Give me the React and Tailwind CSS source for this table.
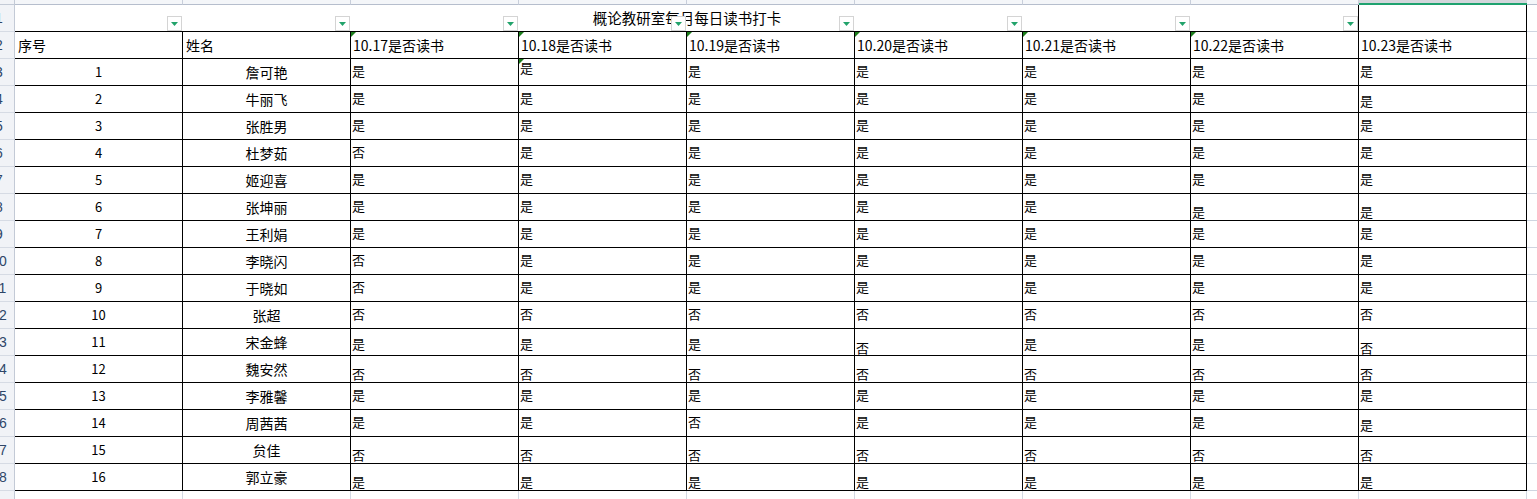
import React from 'react'

const dates = ['10.17', '10.18', '10.19', '10.20', '10.21', '10.22', '10.23']

// vertical offset of the 是/否 text in a cell (the sheet is not consistent)
const padOf = {
  a: 'pt-[3px]',
  u: 'pt-[0px]',
  b: 'pt-[6px]',
  c: 'pt-[9px]',
  d: 'pt-[10px]',
}

const rows = [
  [1, '詹可艳', '是是是是是是是', 'auaaaaa'],
  [2, '牛丽飞', '是是是是是是是', 'aaaaaab'],
  [3, '张胜男', '是是是是是是是', 'aaaaaaa'],
  [4, '杜梦茹', '否是是是是是是', 'aaaaaaa'],
  [5, '姬迎喜', '是是是是是是是', 'aaaaaaa'],
  [6, '张坤丽', '是是是是是是是', 'aaaaacc'],
  [7, '王利娟', '是是是是是是是', 'aaaaaaa'],
  [8, '李晓闪', '否是是是是是是', 'aaaaaaa'],
  [9, '于晓如', '否是是是是是是', 'aaaaaaa'],
  [10, '张超', '否否否否否否否', 'aaaaaaa'],
  [11, '宋金蜂', '是是是否是是否', 'bbbdbbd'],
  [12, '魏安然', '否否否否否否否', 'ccccccc'],
  [13, '李雅馨', '是是是是是是是', 'aaaaaaa'],
  [14, '周茜茜', '是是否是是是是', 'aaaaaab'],
  [15, '贠佳', '否否否否否否否', 'ccccccc'],
  [16, '郭立豪', '是是是是是是是', 'ccccccc'],
]

const cjk = 'font-["Noto_Sans_CJK_SC","Noto_Sans",sans-serif]'

function Corner() {
  return (
    <svg className="absolute top-0 left-0" width="5" height="5" viewBox="0 0 5 5">
      <polygon points="0,0 5,0 0,5" fill="#1b7d1b" />
    </svg>
  )
}

function FilterBtn() {
  return (
    <div className="relative z-10 w-[15px] h-[15px] bg-white border border-[#d4d4d4] flex items-center justify-center">
      <svg width="7" height="4" viewBox="0 0 7 4">
        <polygon points="0,0 7,0 3.5,4" fill="#22a36b" />
      </svg>
    </div>
  )
}

function RowHead({ n, last }) {
  return (
    <div
      className={
        'w-[15px] shrink-0 h-full overflow-hidden bg-[#f1f3f7] border-r border-[#c3cad6] flex items-center ' +
        (last ? '' : 'border-b border-b-[#d6dbe4]')
      }
    >
      <div className="w-[30px] shrink-0 -ml-[16px] text-center text-[14px] text-[#2e4668] font-['Liberation_Sans',sans-serif] leading-none">
        {n}
      </div>
    </div>
  )
}

function Filler() {
  return <div className="flex-1 h-full border-b border-[#cfd5e0]" />
}

export default function App() {
  return (
    <div className="w-[1537px] h-[499px] overflow-hidden bg-white flex flex-col text-black">
      {/* column header tail */}
      <div className="h-[5px] shrink-0 flex">
        <div className="w-[15px] h-full bg-[#f1f3f7] border-r border-b border-[#c3cad6]" />
        {dates.concat(['', '']).slice(0, 8).map((_, i) => (
          <div key={i} className="w-[168px] h-full bg-[#f4f6f9] border-r border-b border-r-[#c9cfdb] border-b-[#b6becd]" />
        ))}
        <div className="w-[168px] h-full flex flex-col">
          <div className="h-[3px] bg-[#d3d6db]" />
          <div className="h-[2px] bg-[#1fa26f]" />
        </div>
        <div className="flex-1 h-full bg-[#f4f6f9] border-b border-[#b6becd]" />
      </div>

      {/* row 1: merged title with filter buttons */}
      <div className="h-[27px] shrink-0 flex">
        <RowHead n={1} />
        <div className="relative flex h-full border-b border-black">
          <div className={'absolute inset-0 flex items-center justify-center text-[14.5px] ' + cjk}>
            概论教研室每月每日读书打卡
          </div>
          {Array.from({ length: 8 }).map((_, i) => (
            <div
              key={i}
              className={
                'w-[168px] h-full flex items-end justify-end ' +
                (i === 7 ? 'border-r border-black' : 'pr-[1px]')
              }
            >
              <FilterBtn />
            </div>
          ))}
        </div>
        <div className="w-[168px] h-full border-r border-b border-black" />
        <Filler />
      </div>

      {/* row 2: headers */}
      <div className="h-[27px] shrink-0 flex">
        <RowHead n={2} />
        <div className={'w-[168px] h-full border-r border-b border-black flex items-center pl-[3px] text-[14px] ' + cjk}>
          序号
        </div>
        <div className={'w-[168px] h-full border-r border-b border-black flex items-center pl-[3px] text-[14px] ' + cjk}>
          姓名
        </div>
        {dates.map((d, i) => (
          <div
            key={d}
            className={'relative w-[168px] h-full border-r border-b border-black flex items-center pl-[2px] text-[14px] ' + cjk}
          >
            {i < 6 && <Corner />}
            {d}是否读书
          </div>
        ))}
        <Filler />
      </div>

      {/* data rows */}
      {rows.map(([no, name, vals, pads], r) => (
        <div key={no} className="h-[27px] shrink-0 flex">
          <RowHead n={r + 3} />
          <div className={'w-[168px] h-full border-r border-b border-black flex items-center justify-center text-[13px] ' + cjk}>
            {no}
          </div>
          <div className={'w-[168px] h-full border-r border-b border-black flex items-center justify-center text-[14px] ' + cjk}>
            {name}
          </div>
          {vals.split('').map((v, i) => (
            <div
              key={i}
              className={
                'relative w-[168px] h-full border-r border-b border-black pl-[1px] text-[13px] leading-[18px] ' +
                cjk + ' ' + padOf[pads[i]]
              }
            >
              {r === 0 && i === 1 && <Corner />}
              {v}
            </div>
          ))}
          <Filler />
        </div>
      ))}

      {/* row 19, cut off */}
      <div className="h-[27px] shrink-0 flex">
        <RowHead n={19} last />
        {Array.from({ length: 9 }).map((_, i) => (
          <div key={i} className="w-[168px] h-full border-r border-[#d3d9e3]" />
        ))}
        <div className="flex-1" />
      </div>
    </div>
  )
}
